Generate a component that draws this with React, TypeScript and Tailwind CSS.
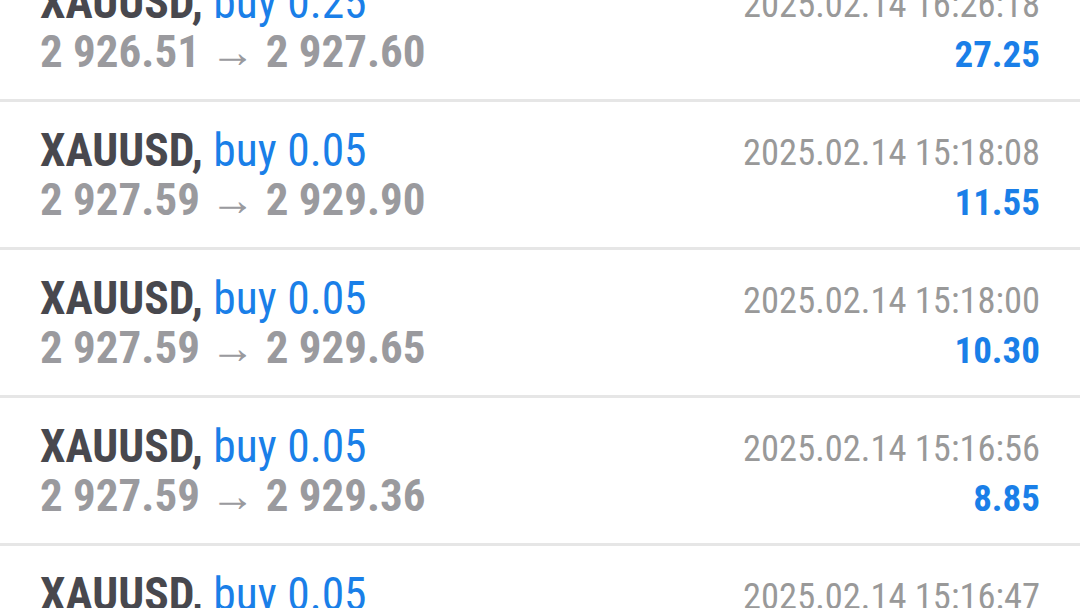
import React from 'react';

type Deal = {
  symbol: string;
  side: string;
  volume: string;
  open: string;
  close: string;
  time: string;
  profit: string;
};

const deals: Deal[] = [
  { symbol: 'XAUUSD', side: 'buy', volume: '0.25', open: '2 926.51', close: '2 927.60', time: '2025.02.14 16:26:18', profit: '27.25' },
  { symbol: 'XAUUSD', side: 'buy', volume: '0.05', open: '2 927.59', close: '2 929.90', time: '2025.02.14 15:18:08', profit: '11.55' },
  { symbol: 'XAUUSD', side: 'buy', volume: '0.05', open: '2 927.59', close: '2 929.65', time: '2025.02.14 15:18:00', profit: '10.30' },
  { symbol: 'XAUUSD', side: 'buy', volume: '0.05', open: '2 927.59', close: '2 929.36', time: '2025.02.14 15:16:56', profit: '8.85' },
  { symbol: 'XAUUSD', side: 'buy', volume: '0.05', open: '2 927.59', close: '2 929.20', time: '2025.02.14 15:16:47', profit: '8.05' },
];

function DealRow({ deal }: { deal: Deal }) {
  return (
    <div>
      <div className="flex h-[145px] justify-between pl-10 pr-10 pt-[23px]">
        <div className="flex flex-col">
          <div className="text-[45.5px] leading-[52px] whitespace-nowrap">
            <span className="font-bold text-[#48484e]">{deal.symbol},</span>{' '}
            <span className="text-[#1a7fe8]">
              {deal.side} {deal.volume}
            </span>
          </div>
          <div className="text-[45px] leading-[46px] font-bold text-[#9a9a9e] whitespace-nowrap">
            {deal.open} <span className="font-normal">→</span> {deal.close}
          </div>
        </div>
        <div className="flex flex-col items-end">
          <div className="mt-[3px] text-[36.5px] leading-[50px] text-[#999999] whitespace-nowrap">{deal.time}</div>
          <div className="text-[37px] leading-[50px] font-bold text-[#1a7fe8]">{deal.profit}</div>
        </div>
      </div>
      <div className="h-[3px] bg-[#e6e6e6]" />
    </div>
  );
}

export default function App() {
  return (
    <div
      className="h-[608px] w-[1080px] overflow-hidden bg-white"
      style={{ fontFamily: '"Roboto Condensed", Roboto, sans-serif' }}
    >
      <div className="-mt-[46px]">
        {deals.map((deal, i) => (
          <DealRow key={i} deal={deal} />
        ))}
      </div>
    </div>
  );
}
